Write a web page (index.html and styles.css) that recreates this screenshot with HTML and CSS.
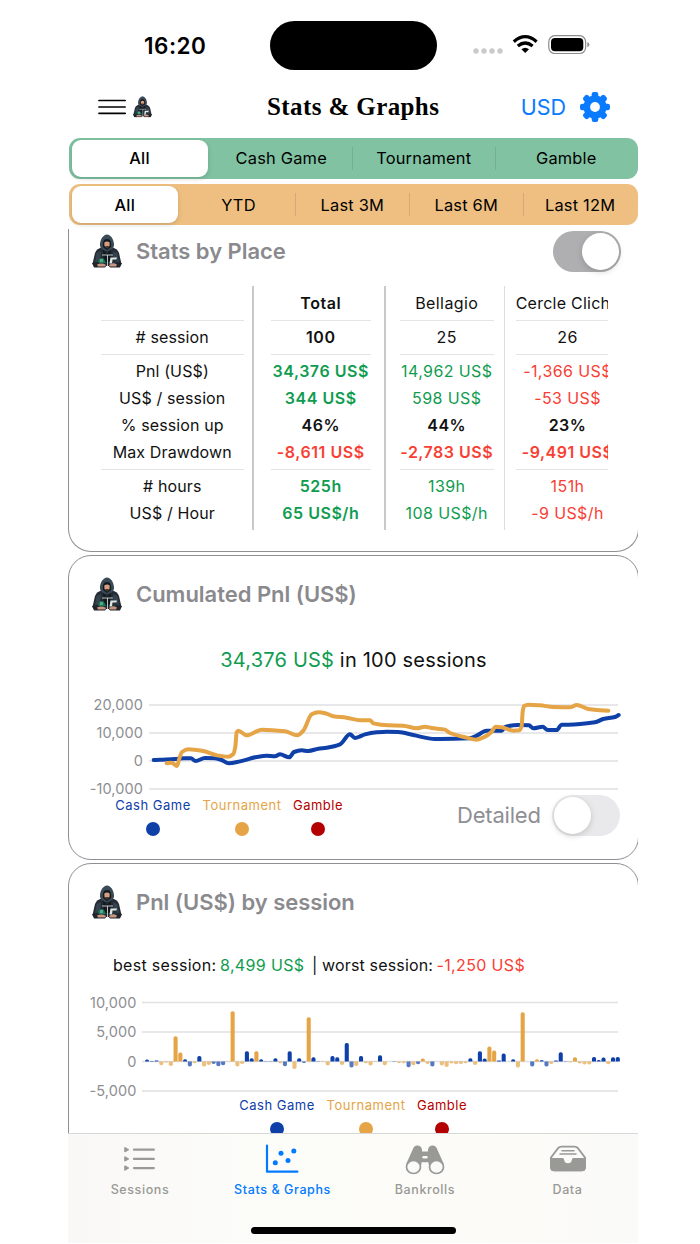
FILE: index.html
```html
<!DOCTYPE html>
<html lang="en">
<head>
<meta charset="utf-8">
<title>Stats &amp; Graphs</title>
<link rel="stylesheet" href="styles.css">
</head>
<body>
<svg class="defs" width="0" height="0" aria-hidden="true">
  <symbol id="hooded" viewBox="0 0 30 34">
    <path d="M.5 30 L3 19 Q4.500 14.500 11 13 L19 13 Q25.500 14.500 27 19 L29.500 30 L27 32 L3 32Z" fill="#232c35"/>
    <path d="M4.500 19 L3 28 L8 27 L9 17Z M25.500 19 L27 28 L22 27 L21 17Z" fill="#35434e"/>
    <path d="M15 0.500 C11 1 8.500 5 8 10 C7.500 14 11 17 15 17 C19 17 22.500 14 22 10 C21.500 5 19 1 15 .5Z" fill="#3a4a57"/>
    <path d="M15 5 C11.500 5 10.500 8 11 13 L15 16 L19 13 C19.500 8 18.500 5 15 5Z" fill="#14191e"/>
    <path d="M12.300 8.500 Q15 6.500 17.700 8.500 L17.500 12 Q15 15 12.500 12Z" fill="#d79f82"/>
    <path d="M13 12 H17 L15.500 15Z" fill="#4a342a"/>
    <path d="M11 15.500 L15 20 L19 15.500 L18 28 H12Z" fill="#14191e"/>
    <path d="M10 21 H21 M15.500 21 V32" stroke="#ccd6d6" stroke-width=".9"/>
    <path d="M6 27 Q8 22.500 12 25 L14 29 H7Z" fill="#1c765a"/>
    <path d="M8 25 h3 v3 h-3Z" fill="#4dac83"/>
    <path d="M18.500 23.500 H25 L23 29.500 H17.500Z" fill="#e1e7e5"/>
    <path d="M20.500 25.500 H25 L23.500 29.500 H20Z" fill="#263039"/>
    <path d="M0 29 Q6 28 9 30.500 L15 31 L13 33.500 H2Z M30 29 Q24 28 22 30.500 L16 31 L18 33.500 H28Z" fill="#20252b"/>
    <path d="M5 30.500 Q10 28.500 14 31 L13 32.500 H6Z M25 30.500 Q21 28.500 17 31 L18 32.500 H24Z" fill="#c99580"/>
  </symbol>
</svg>
<main class="phone">
  <header class="status">
    <div class="time">16:20</div>
    <div class="island"></div>
    <svg class="signals" width="118" height="24" viewBox="0 0 118 24">
      <g fill="#cacaca"><circle cx="3" cy="18" r="2.700"/><circle cx="11" cy="18" r="2.700"/><circle cx="19" cy="18" r="2.700"/><circle cx="27" cy="18" r="2.700"/></g>
      <g fill="none" stroke="#000" stroke-width="3.200"><path d="M40.800 8.700 Q52.200 -1.300 63.600 8.700"/><path d="M44.800 13 Q52.200 7 59.600 13"/></g>
      <path d="M48.400 16.300 Q52.200 13.300 56 16.300 L52.200 20Z"/>
      <rect x="75.800" y="2.700" width="36.800" height="17.800" rx="6" fill="none" stroke="#8c8c8c" stroke-width="1.200"/>
      <rect x="78" y="5" width="32.300" height="13.200" rx="4"/>
      <path d="M114.300 9 Q116.400 10 116.400 11.600 Q116.400 13.200 114.300 14.200Z" fill="#8c8c8c"/>
    </svg>
  </header>
  <nav class="navbar">
    <div class="menu">
      <svg width="28" height="16" viewBox="0 0 28 16"><path d="M1 1.500 H27.200 M1 8 H27.200 M1 14.300 H27.200" stroke="#000" stroke-width="1.700" stroke-linecap="round"/></svg>
      <svg width="19" height="21.500"><use href="#hooded"/></svg>
    </div>
    <h1 class="title">Stats &amp; Graphs</h1>
    <div class="actions">
      <span class="usd">USD</span>
      <svg id="gear" width="30" height="30" viewBox="-15 -15 30 30">
        <g fill="#0a7aff"><g id="t"><rect x="-3.300" y="-15" width="6.600" height="30" rx="2.200"/><rect x="-15" y="-3.300" width="30" height="6.600" rx="2.200"/></g><use href="#t" transform="rotate(45)"/><circle r="11.600"/></g><circle r="4.900" fill="#fff"/>
      </svg>
    </div>
  </nav>
  <div class="segment green"><span class="on">All</span><span>Cash Game</span><span class="sep">Tournament</span><span class="sep">Gamble</span></div>
  <div class="segment orange"><span class="on">All</span><span>YTD</span><span class="sep">Last 3M</span><span class="sep">Last 6M</span><span class="sep">Last 12M</span></div>

  <div class="scroll">
    <section class="card places">
      <div class="cardhead"><svg width="30" height="34"><use href="#hooded"/></svg><h2>Stats by Place</h2><div class="toggle active"></div></div>
      <div class="table">
        <div class="col labels"><p></p><hr><p># session</p><hr><p>Pnl (US$)</p><p>US$ / session</p><p>% session up</p><p>Max Drawdown</p><hr><p># hours</p><p>US$ / Hour</p></div>
        <div class="col total"><p>Total</p><hr><p>100</p><hr><p class="up">34,376 US$</p><p class="up">344 US$</p><p>46%</p><p class="down">-8,611 US$</p><hr><p class="up">525h</p><p class="up">65 US$/h</p></div>
        <div class="col bellagio"><p>Bellagio</p><hr><p>25</p><hr><p class="up">14,962 US$</p><p class="up">598 US$</p><p class="b">44%</p><p class="down b">-2,783 US$</p><hr><p class="up">139h</p><p class="up">108 US$/h</p></div>
        <div class="clip"><div class="col cercle"><p>Cercle Clichy</p><hr><p>26</p><hr><p class="down">-1,366 US$</p><p class="down">-53 US$</p><p class="b">23%</p><p class="down b">-9,491 US$</p><hr><p class="down">151h</p><p class="down">-9 US$/h</p></div></div>
      </div>
    </section>
    <section class="card cumulated">
      <div class="cardhead"><svg width="30" height="34"><use href="#hooded"/></svg><h2>Cumulated Pnl (US$)</h2></div>
      <p class="summary"><span class="up">34,376 US$</span> in 100 sessions</p>
      <svg class="chart" width="570" height="110" viewBox="68 690 570 110">
        <path class="grid" d="M149 705H618 M149 733H618 M149 761H618 M149 789H618"/>
        <g class="axis"><text x="143" y="710.200">20,000</text><text x="143" y="738.200">10,000</text><text x="143" y="766.200">0</text><text x="143" y="794.200">-10,000</text></g>
        <path id="cash-line" class="line blue"/><path id="tour-line" class="line gold"/>
      </svg>
      <div class="foot">
        <div class="legend"><span class="cash">Cash Game</span><span class="tour">Tournament</span><span class="gamble">Gamble</span></div>
        <label class="detail">Detailed</label><div class="toggle"></div>
      </div>
    </section>
    <section class="card sessions">
      <div class="cardhead"><svg width="30" height="34"><use href="#hooded"/></svg><h2>Pnl (US$) by session</h2></div>
      <p class="records"><span class="best">best session:</span><span class="up">8,499 US$</span><span class="worst">| worst session:</span><span class="down">-1,250 US$</span></p>
      <svg class="chart" width="570" height="112" viewBox="68 990 570 112">
        <path class="grid" d="M142 1002.500H618 M142 1032H618 M142 1061.500H618 M142 1091H618"/>
        <g class="axis"><text x="136.500" y="1007.600">10,000</text><text x="136.500" y="1037.200">5,000</text><text x="136.500" y="1066.800">0</text><text x="136.500" y="1096.200">-5,000</text></g>
        <g id="bars"></g>
      </svg>
      <div class="legend centered"><span class="cash">Cash Game</span><span class="tour">Tournament</span><span class="gamble">Gamble</span></div>
    </section>
  </div>

  <footer class="tabs">
    <div class="tab"><svg width="36" height="34" viewBox="0 0 36 34"><g fill="#999995"><path d="M2.200 6 Q2.200 4.700 3.500 5.200 L6.800 7.200 Q7.400 7.700 6.800 8.200 L3.500 10.100 Q2.200 10.700 2.200 9.500Z"/><path d="M2.200 15.200 Q2.200 13.900 3.500 14.400 L6.800 16.400 Q7.400 16.900 6.800 17.400 L3.500 19.300 Q2.200 19.900 2.200 18.700Z"/><path d="M2.200 24.400 Q2.200 23.100 3.500 23.600 L6.800 25.600 Q7.400 26.100 6.800 26.600 L3.500 28.500 Q2.200 29.100 2.200 27.900Z"/></g><path d="M12 7.700H31.800 M12 16.900H31.800 M12 26.100H31.800" stroke="#999995" stroke-width="2.300" stroke-linecap="round"/></svg><span>Sessions</span></div>
    <div class="tab selected"><svg width="36" height="34" viewBox="0 0 36 34"><path d="M2 3.500V29.700H32.400" fill="none" stroke="#007aff" stroke-width="2.200" stroke-linecap="round" stroke-linejoin="round"/><g fill="#007aff"><circle cx="10.300" cy="20.800" r="2.500"/><circle cx="16" cy="11.300" r="2.500"/><circle cx="23" cy="18.500" r="2.500"/><circle cx="28.800" cy="9" r="2.500"/></g></svg><span>Stats &amp; Graphs</span></div>
    <div class="tab"><svg width="40" height="34" viewBox="0 0 40 34"><path d="M1.200 22 L7.700 7.500 Q9 3.500 12.300 3.500 Q16.200 3.500 17 7.500 V9.500 H23 V7.500 Q23.800 3.500 27.700 3.500 Q31 3.500 32.300 7.500 L38.800 22 L31 27 L23.500 22.500 V20.200 H16.500 V22.500 L9 27Z" fill="#999995"/><rect x="17.300" y="14" width="5.400" height="2.400" rx="1.200" fill="#fafaf8"/><g fill="#fafaf8" stroke="#999995" stroke-width="1.700"><ellipse cx="8.500" cy="25" rx="7" ry="6.500"/><ellipse cx="31.500" cy="25" rx="7" ry="6.500"/></g></svg><span>Bankrolls</span></div>
    <div class="tab"><svg width="36" height="34" viewBox="0 0 36 34"><path d="M1 15.500 L8.200 6 Q9.500 4.600 11.500 4.600 H24.500 Q26.500 4.600 27.800 6 L35 15.500 V25 Q35 28.300 31.700 28.300 H4.300 Q1 28.300 1 25Z" fill="none" stroke="#999995" stroke-width="1.900" stroke-linejoin="round"/><path d="M.3 16 H12.500 Q14 16 14.200 18 Q14.600 21.200 18 21.200 Q21.400 21.200 21.800 18 Q22 16 23.500 16 H35.700 V25.300 Q35.700 29.300 31.700 29.300 H4.300 Q.3 29.300 .3 25.300Z" fill="#999995"/><path d="M12 8.800H24 M10 12H26" stroke="#999995" stroke-width="1.500" stroke-linecap="round"/></svg><span>Data</span></div>
    <div class="home"></div>
  </footer>
</main>
<script src="charts.js"></script>
</body>
</html>
```
FILE: styles.css
```css
* { box-sizing: border-box; }
body { margin: 0; background: #fff; font-family: Inter, Roboto, sans-serif; color: #111; }
p, h1, h2, hr { margin: 0; }
.defs { position: absolute; }
.phone { width: 570px; height: 1243px; margin-left: 68px; overflow: hidden; background: #fff; }
.up { color: #109c50; }
.down { color: #f93e34; }

.status { display: flex; height: 88px; padding-top: 21px; }
.time { width: 202px; padding: 11.500px 0 0 76px; font-size: 22.500px; line-height: 25px; font-weight: 600; color: #000; letter-spacing: .5px; }
.island { width: 167px; height: 49px; border-radius: 25px; background: #000; }
.signals { margin: 12px 0 0 36px; }

.navbar { display: flex; align-items: center; height: 38px; margin-bottom: 11.500px; padding: 0 28px 0 30px; }
.menu { display: flex; align-items: center; width: 169px; gap: 7px; }
.title { width: 174px; font-family: "Liberation Serif", serif; font-size: 25px; line-height: 30px; font-weight: 700; color: #000; letter-spacing: .4px; white-space: nowrap; }
.actions { display: flex; align-items: center; margin-left: auto; gap: 14px; }
.usd { font-size: 21.500px; color: #0a7aff; }

.segment { display: flex; height: 41.500px; margin: 0 0 5px 1px; padding: 2.500px; border-radius: 11px; }
.segment span { flex: 1; display: flex; align-items: center; justify-content: center; font-size: 16.400px; font-weight: 400; color: #000; letter-spacing: .2px; }
.segment .on { flex: none; border-radius: 9px; background: #fff; box-shadow: 0 2px 5px rgba(0,0,0,.14); font-weight: 500; }
.segment .sep { border-left: 1px solid rgba(80,80,80,.18); margin: 7px 0; }
.green { background: #80c2a2; margin-bottom: 4.500px; padding-right: 1px; }
.green .on { width: 136px; margin-right: 3px; }
.orange { background: #eebf80; margin-bottom: 5.500px; padding-right: 1.500px; }
.orange .on { width: 106.500px; margin-right: 4px; }
.orange span { padding-top: 1px; }

.scroll { height: 904px; margin-top: -2px; overflow: hidden; }
.card { width: 571px; border: 1.400px solid #8e8e93; border-radius: 23px; }
.places { height: 323px; border-top: 0; border-radius: 0 0 23px 23px; }
.cardhead { display: flex; align-items: center; height: 45px; padding: 0 17.500px 0 22.500px; }
.cardhead h2 { margin-left: 14.500px; font-size: 22px; font-weight: 600; color: #8a8a8e; letter-spacing: -.03px; white-space: nowrap; }
.toggle { flex: none; width: 68px; height: 41px; padding: 2px; border-radius: 21px; background: #e9e9eb; }
.toggle::after { content: ""; display: block; width: 37px; height: 37px; border-radius: 50%; background: #fff; box-shadow: 0 2px 6px rgba(0,0,0,.16); }
.toggle.active { margin-left: auto; background: #afafb1; }
.toggle.active::after { margin-left: auto; }

.table { display: flex; height: 244px; margin-top: 12px; }
.col { padding-top: 4.300px; text-align: center; }
.col p { display: flex; justify-content: center; height: 27px; font-size: 16px; line-height: 27px; letter-spacing: .4px; white-space: nowrap; }
.col hr { height: 7px; border: 0; background: linear-gradient(#e4e4e4, #e4e4e4) 0 3px / 100% 1px no-repeat; }
.labels { width: 174.500px; margin-left: 8.500px; padding-left: 23px; padding-right: 8px; }
.labels p { letter-spacing: .12px; }
.total { width: 133.500px; padding-left: 17px; padding-right: 13px; border: solid #c9c9cb; border-width: 0 2.500px; font-weight: 600; }
.total p { letter-spacing: .55px; }
.bellagio { width: 119.500px; padding-left: 14px; padding-right: 10px; border-right: 1px solid #dcdcde; }
.clip { width: 102.500px; overflow: hidden; }
.cercle { width: 114px; padding-left: 11px; }
.cercle p:first-child { letter-spacing: .25px; }
.col .b { font-weight: 600; letter-spacing: .5px; }

.cumulated { height: 304.500px; margin-top: 3.500px; }
.cumulated .cardhead, .sessions .cardhead { margin-top: 15.500px; }
.summary { height: 44px; margin-top: 21.500px; text-align: center; font-size: 20px; line-height: 44px; letter-spacing: .2px; }
.chart { display: block; margin-left: -1px; margin-top: 7.500px; }
.grid { stroke: #e1e1e3; stroke-width: 1.400px; }
.axis { font-size: 14.500px; fill: #8e8e93; text-anchor: end; letter-spacing: .1px; }
.line { fill: none; stroke-width: 4px; stroke-linecap: round; stroke-linejoin: round; }
.blue { stroke: #0f40a8; }
.gold { stroke: #e5a445; }
.foot { display: flex; height: 45px; margin-top: -5px; }
.legend { display: flex; height: 42px; padding-left: 46px; gap: 12px; font-size: 13px; line-height: 20px; }
.legend span { display: flex; flex-direction: column; align-items: center; letter-spacing: .5px; white-space: nowrap; }
.legend span::after { content: ""; width: 14px; height: 14px; margin-top: 7px; border-radius: 50%; background: currentColor; }
.cash { width: 76px; color: #0f40a8; }
.tour { width: 78px; color: #e5a445; }
.gamble { width: 50px; color: #b40000; }
.detail { width: 94.500px; margin-left: 114px; padding-top: 7.500px; font-size: 22px; line-height: 27px; color: #8e8e93; letter-spacing: -.2px; }

.sessions { height: 310px; margin-top: 3.500px; }
.records { display: flex; height: 30px; margin-top: 25.500px; padding-left: 44px; font-size: 16px; line-height: 30px; letter-spacing: .35px; white-space: nowrap; }
.records .best { width: 107px; letter-spacing: .3px; }
.records .up { width: 92px; }
.records .worst { width: 124.500px; letter-spacing: .15px; }
.sessions .chart { margin-top: 10px; }
.centered { margin-top: -7.500px; padding-left: 170px; }

.tabs { display: flex; flex-wrap: wrap; align-content: flex-start; height: 110px; border-top: 1px solid #d8d8d8; background: linear-gradient(90deg, #f9f8f6, #fcfcf9 35%, #fcfbf8 80%, #fafaf8); }
.tab { width: 25%; height: 92px; padding: 8px 0 0 1.500px; display: flex; flex-direction: column; align-items: center; font-size: 12.500px; font-weight: 500; line-height: 18px; color: #999995; letter-spacing: .6px; }
.tab span { margin-top: 5px; white-space: nowrap; }
.tabs .selected { color: #007aff; }
.home { width: 205px; height: 7px; margin: 1px auto 0 183px; border-radius: 4px; background: #000; }
```
FILE: charts.js
```js
// Monotone cubic interpolation, tangents computed per point.
function smooth(pts) {
  const n = pts.length, s = [], m = [];
  for (let i = 0; i < n - 1; i++) s.push((pts[i + 1][1] - pts[i][1]) / (pts[i + 1][0] - pts[i][0]));
  for (let i = 0; i < n; i++) {
    if (i === 0) m.push(s[0]);
    else if (i === n - 1) m.push(s[n - 2]);
    else m.push(s[i - 1] * s[i] <= 0 ? 0 : 2 * s[i - 1] * s[i] / (s[i - 1] + s[i]));
  }
  let d = `M${pts[0]}`;
  for (let i = 0; i < n - 1; i++) {
    const [x, y] = pts[i], [u, v] = pts[i + 1], h = (u - x) / 3;
    d += `C${x + h},${y + m[i] * h} ${u - h},${v - m[i + 1] * h} ${u},${v}`;
  }
  return d;
}
const cash = [281,570,300,569,345,567,370,565,393,565,407,573,435,564,465,565,485,570,506,580,540,574,590,561,620,557,645,559,660,553,688,562,702,546,725,541,745,543,775,536,800,533,840,523,870,493,885,504,903,498,915,493,950,487,980,485,1015,486,1060,495,1125,507,1140,507,1230,505,1250,497,1280,482,1325,482,1337,470,1375,465,1407,466,1420,475,1448,470,1463,480,1490,480,1505,464,1525,464,1605,457,1630,447,1665,441,1676,435];
const tour = [320,580,335,578,351,588,358,566,366,546,385,538,430,543,470,556,505,560,520,552,526,530,530,487,535,482,560,496,605,479,675,484,712,496,730,482,755,433,775,427,800,431,820,439,860,443,900,451,930,451,940,460,985,466,1030,467,1070,475,1095,470,1115,474,1155,479,1170,489,1220,503,1250,509,1275,500,1295,485,1307,470,1325,472,1360,482,1378,481,1385,468,1388,425,1392,408,1405,404,1440,406,1480,411,1530,412,1550,405,1585,417,1610,420,1645,422];
function plot(id, flat) {
  const pts = [];
  for (let i = 0; i < flat.length; i += 2) pts.push([60 + flat[i] / 3, 570 + flat[i + 1] / 3]);
  document.getElementById(id).setAttribute('d', smooth(pts));
}
plot('cash-line', cash);
plot('tour-line', tour);

// One entry per session: game kind (b = cash, o = tournament) and signed bar length.
const sessions = 'b6 b2 b3 o-11 o-3 o-13 o76 o27 b7 b-15 o-5 b17 o-15 o-10 b-7 b-14 b-11 o1 o151 o-15 o-7 b31 b10 o31 b7 b1 b1 b10 o-5 b-14 b31 o-22 b10 b-4 o133 b13 b1 o-1 o-12 b17 b13 o-10 b56 b-18 o-13 b17 o-5 o-12 o-1 b19 o-11 b0 b1 o-4 o-5 b-17 o-11 b-8 o9 o-7 b-15 b0 o-12 o-16 o-6 o-8 o-7 o-5 b10 o-10 b31 b9 o45 o33 b3 b24 b0 b7 o-18 o148 b0 b-15 o7 b4 b-15 o-7 b3 b28 b1 o-2 o13 o-6 o-9 o-9 b14 b5 b12 o-8 b13 b14'.split(' ');
document.getElementById('bars').innerHTML = sessions.map((s, i) => {
  const v = +s.slice(1) / 3, x = 145 + i * 4.755, r = Math.min(1.8, Math.abs(v)), k = v < 0 ? -1 : 1;
  const y = 1061.6, end = y - v;
  const color = s[0] === 'b' ? '#0f40a8' : '#e5a445';
  return `<path fill="${color}" opacity="${v < 0 ? .7 : 1}" d="M${x} ${y}V${end + k * r}Q${x} ${end} ${x + r} ${end}H${x + 4.1 - r}Q${x + 4.1} ${end} ${x + 4.1} ${end + k * r}V${y}Z"/>`;
}).join('');
```
